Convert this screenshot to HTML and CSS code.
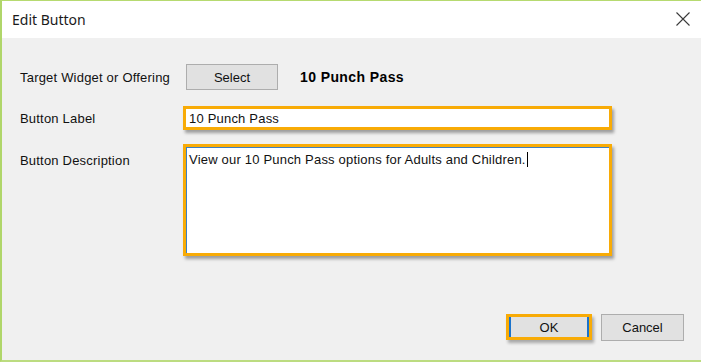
FILE: index.html
```html
<!DOCTYPE html>
<html>
<head>
<meta charset="utf-8">
<link rel="stylesheet" href="styles.css">
</head>
<body>
<div class="window">
  <div class="titlebar">
    <span class="title">Edit Button</span>
    <svg class="close" width="14" height="14" viewBox="0 0 14 14"><path d="M0.5 0.5 L13.5 13.5 M13.5 0.5 L0.5 13.5" stroke="#3a3a3a" stroke-width="1.1" fill="none"/></svg>
  </div>
  <div class="content">
    <div class="form">
      <div class="label l1">Target Widget or Offering</div>
      <div class="field f1">
        <div class="btn select">Select</div>
        <div class="offering">10 Punch Pass</div>
      </div>
      <div class="label l2">Button Label</div>
      <div class="field f2">
        <div class="hl input">10 Punch Pass</div>
      </div>
      <div class="label l3">Button Description</div>
      <div class="field f3">
        <div class="hl textarea"><span class="caret">View our 10 Punch Pass options for Adults and Children.</span></div>
      </div>
    </div>
    <div class="footer">
      <div class="okwrap"><div class="okbtn">OK</div></div>
      <div class="btn cancel">Cancel</div>
    </div>
  </div>
</div>
</body>
</html>
```
FILE: styles.css
```css
html, body {
  margin: 0;
  padding: 0;
}
body {
  width: 701px;
  height: 362px;
  overflow: hidden;
  font-family: "Liberation Sans", Arial, sans-serif;
  font-size: 13px;
  color: #111;
}
.window {
  box-sizing: border-box;
  width: 701px;
  height: 362px;
  border-top: 1px solid #b6da70;
  border-left: 2px solid #b0d66a;
  border-bottom: 2px solid #bcdc80;
  background: #f0f0f0;
  display: flex;
  flex-direction: column;
}
.titlebar {
  height: 37px;
  background: #fff;
  display: flex;
  align-items: center;
  justify-content: space-between;
  padding: 0 11px 0 10px;
  flex-shrink: 0;
}
.title {
  font-family: "Noto Sans", "Open Sans", sans-serif;
  font-size: 14px;
  color: #1a1a1a;
  margin-top: -1px;
}
.close {
  display: block;
  margin-top: -1px;
}
.content {
  flex: 1;
  display: flex;
  flex-direction: column;
  padding: 26px 89px 0 18px;
}
.form {
  display: grid;
  grid-template-columns: 163px 1fr;
  grid-template-rows: 26px 24px 112px;
  row-gap: 0;
}
.label {
  display: flex;
  align-items: center;
  letter-spacing: 0.2px;
}
.l3 {
  align-items: flex-start;
  padding-top: 9px;
}
.f2, .l2 { margin-top: 16px; }
.f3, .l3 { margin-top: 14px; }
.form {
  grid-template-rows: 26px 40px 126px;
}
.f1 {
  display: flex;
  align-items: center;
}
.btn {
  box-sizing: border-box;
  background: #e1e1e1;
  border: 1px solid #adadad;
  display: flex;
  align-items: center;
  justify-content: center;
  color: #111;
}
.select {
  width: 92px;
  height: 26px;
  margin-left: 3px;
}
.offering {
  font-weight: bold;
  font-size: 14px;
  margin-left: 22px;
  letter-spacing: 0.4px;
  color: #000;
}
.hl {
  box-sizing: border-box;
  border: 3px solid #f8ab06;
  background: #fff;
  box-shadow: 2px 3px 3px rgba(0, 0, 0, 0.35);
}
.input {
  height: 24px;
  display: flex;
  align-items: center;
  padding-left: 3px;
  padding-top: 1px;
  letter-spacing: 0.2px;
}
.textarea {
  height: 112px;
  padding: 5px 3px 0 3px;
  border-top-width: 3px;
  box-shadow: inset 0 1px 0 #3c7fc4, inset 1px 0 0 #3c7fc4, 2px 3px 3px rgba(0, 0, 0, 0.35);
  letter-spacing: 0.2px;
}
.caret {
  border-right: 1px solid #000;
  padding-right: 1px;
}
.footer {
  display: flex;
  justify-content: flex-end;
  gap: 9px;
  margin-top: auto;
  margin-bottom: 19px;
  margin-right: -72px;
}
.okwrap {
  box-sizing: border-box;
  width: 86px;
  height: 26px;
  border: 3px solid #f8ab06;
  box-shadow: 2px 3px 3px rgba(0, 0, 0, 0.3);
  background: #e1e1e1;
}
.okbtn {
  box-sizing: border-box;
  height: 100%;
  border-left: 2px solid #1a73cc;
  border-right: 2px solid #1a73cc;
  display: flex;
  align-items: center;
  justify-content: center;
  padding-top: 1px;
}
.cancel {
  width: 83px;
  height: 27px;
}
```
